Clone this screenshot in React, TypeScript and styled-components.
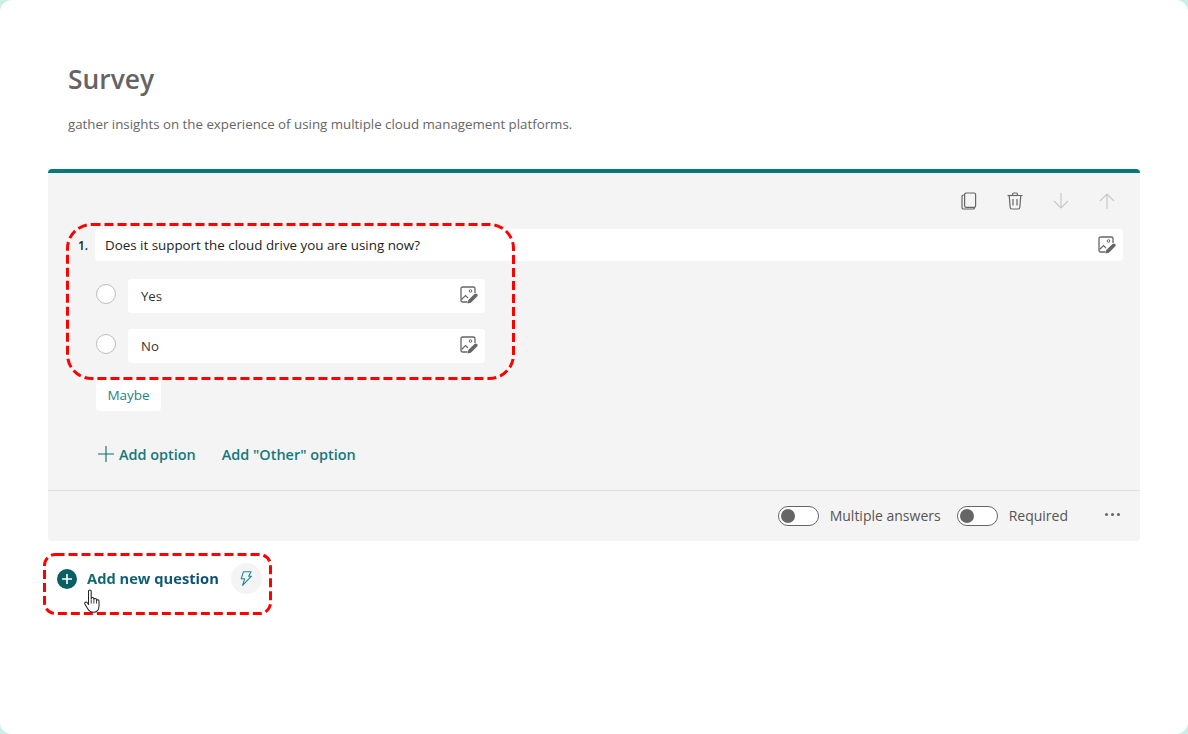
import React from "react";
import styled, { createGlobalStyle } from "styled-components";

const GlobalStyle = createGlobalStyle`
  html, body {
    margin: 0;
    padding: 0;
    background: #cdeee6;
  }
  * {
    box-sizing: border-box;
  }
`;

const ImageEditIcon = () => (
  <svg width="18" height="18" viewBox="0 0 18 18" fill="none">
    <path d="M7.500 16H2.600C1.700 16 1 15.300 1 14.400V2.600C1 1.700 1.700 1 2.600 1h10.800c.9 0 1.600.7 1.600 1.600V7" stroke="#666" strokeWidth="1.300" />
    <circle cx="10.500" cy="5" r="1.300" stroke="#666" strokeWidth="1" />
    <path d="M1.500 13.500L5.500 9.500l2.500 2.500" stroke="#666" strokeWidth="1.100" />
    <path d="M7.500 17.500l.8-3.400 6.200-6.200c.7-.7 1.900-.7 2.600 0 .7.7.7 1.900 0 2.600l-6.200 6.200-3.400.8z" fill="#666" />
  </svg>
);

const CopyIcon = () => (
  <svg width="16" height="18" viewBox="0 0 16 18" fill="none" stroke="#666" strokeWidth="1.2">
    <rect x="3.6" y="1" width="11" height="14.4" rx="1.6" />
    <path d="M3.6 3H2.6C1.7 3 1 3.7 1 4.6v10.8C1 16.3 1.7 17 2.6 17h9.4c.9 0 1.6-.5 1.6-1.6" />
  </svg>
);

const TrashIcon = () => (
  <svg width="16" height="18" viewBox="0 0 16 18" fill="none" stroke="#666" strokeWidth="1.2">
    <path d="M0.5 3.5h15" />
    <path d="M5.5 3.5V2.4C5.5 1.6 6.1 1 6.9 1h2.2c.8 0 1.4.6 1.4 1.4v1.1" />
    <path d="M2.2 3.5l1 12c.1.9.8 1.5 1.6 1.5h6.4c.8 0 1.5-.6 1.6-1.5l1-12" />
    <path d="M6 7v6.5M10 7v6.5" />
  </svg>
);

const ArrowIcon = ({ up }: { up?: boolean }) => (
  <svg width="16" height="16" viewBox="0 0 16 16" fill="none" stroke="#c8c8c8" strokeWidth="1.2">
    {up ? <path d="M8 16V1M1 8l7-7 7 7" /> : <path d="M8 0v15M1 8l7 7 7-7" />}
  </svg>
);

const BoltIcon = () => (
  <svg width="12" height="15" viewBox="0 0 12 15" fill="none" stroke="#1b8a8f" strokeWidth="1.1" strokeLinejoin="round">
    <path d="M3.5 0.7h7.6L8.6 5.2h2.9L2.6 14.3l2-6.5H1.2z" />
  </svg>
);

const HandCursor = () => (
  <svg width="18" height="24" viewBox="0 0 18 24" fill="none">
    <path
      d="M4.200 2.200c0-1.700 2.600-1.700 2.600 0v7.200c.2-1.600 2.600-1.500 2.600.1v.6c.2-1.400 2.500-1.300 2.500.3v.7c.3-1.200 2.400-1 2.400.5v4.800c0 3.400-2 6-5.400 6-2.700 0-4.100-1-5.300-3.100L.7 14.400c-.8-1.500 1.300-2.600 2.300-1.200l1.200 1.700z"
      fill="#fff"
      stroke="#222"
      strokeWidth="1"
      strokeLinejoin="round"
    />
    <path d="M6.800 10v4M9.400 10.500v3.500M11.900 11.200v2.800" stroke="#222" strokeWidth="0.8" />
  </svg>
);

// red dashed marker drawn over the screenshot
const Marker = ({ width, height, radius }: { width: number; height: number; radius: number }) => (
  <svg width={width} height={height} fill="none">
    <rect
      x="1.5"
      y="1.5"
      width={width - 3}
      height={height - 3}
      rx={radius}
      stroke="#f00"
      strokeWidth="3"
      strokeDasharray="9 4"
    />
  </svg>
);

const App: React.FC = () => {
  const options = ["Yes", "No"];

  return (
    <>
      <GlobalStyle />
      <Panel>
        <Header>
          <Title>Survey</Title>
          <Subtitle>gather insights on the experience of using multiple cloud management platforms.</Subtitle>
        </Header>

        <Card>
          <Toolbar>
            <ToolButton><CopyIcon /></ToolButton>
            <ToolButton><TrashIcon /></ToolButton>
            <ToolButton><ArrowIcon /></ToolButton>
            <ToolButton><ArrowIcon up /></ToolButton>
          </Toolbar>

          <QuestionRow>
            <Number>1.</Number>
            <QuestionField>
              <span>Does it support the cloud drive you are using now?</span>
              <ImageEditIcon />
            </QuestionField>
          </QuestionRow>

          <OptionList>
            {options.map((option) => (
              <OptionRow key={option}>
                <Radio />
                <OptionField>
                  <span>{option}</span>
                  <ImageEditIcon />
                </OptionField>
              </OptionRow>
            ))}
            <MaybeChip>Maybe</MaybeChip>
          </OptionList>

          <AddRow>
            <AddLink>
              <svg width="16" height="16" viewBox="0 0 16 16" stroke="#0b6a6e" strokeWidth="1.1">
                <path d="M8 0v16M0 8h16" />
              </svg>
              Add option
            </AddLink>
            <AddLink>Add "Other" option</AddLink>
          </AddRow>

          <Footer>
            <ToggleGroup>
              <Toggle />
              <ToggleLabel>Multiple answers</ToggleLabel>
            </ToggleGroup>
            <ToggleGroup>
              <Toggle />
              <ToggleLabel>Required</ToggleLabel>
            </ToggleGroup>
            <More>
              <i />
              <i />
              <i />
            </More>
          </Footer>
        </Card>

        <NewQuestion>
          <PlusCircle>
            <svg width="10" height="10" viewBox="0 0 10 10" stroke="#fff" strokeWidth="1.6">
              <path d="M5 0v10M0 5h10" />
            </svg>
          </PlusCircle>
          <NewQuestionText>Add new question</NewQuestionText>
          <BoltButton><BoltIcon /></BoltButton>
        </NewQuestion>

        <QuestionHighlight><Marker width={449} height={157} radius={24} /></QuestionHighlight>
        <AddHighlight><Marker width={229} height={62} radius={11} /></AddHighlight>
        <Cursor><HandCursor /></Cursor>
      </Panel>
    </>
  );
};

export default App;

const font = `"Open Sans", "Noto Sans", sans-serif`;

const Panel = styled.div`
  position: relative;
  width: 1188px;
  height: 734px;
  background: #fff;
  border-radius: 12px;
  overflow: hidden;
  font-family: ${font};
`;

const Header = styled.header`
  display: flex;
  flex-direction: column;
  height: 169px;
  padding: 61px 0 0 68px;
`;

const Title = styled.h1`
  margin: 0;
  font-size: 26.4px;
  line-height: 36px;
  font-weight: 600;
  color: #646464;
`;

const Subtitle = styled.p`
  margin: 17px 0 0;
  font-size: 13.3px;
  line-height: 20px;
  color: #666;
`;

const Card = styled.section`
  margin: 0 48px;
  height: 372px;
  background: #f4f4f4;
  border-top: 4px solid #007a7c;
  border-radius: 4px;
  display: flex;
  flex-direction: column;
`;

const Toolbar = styled.div`
  display: flex;
  justify-content: flex-end;
  align-items: center;
  gap: 14px;
  height: 56px;
  padding-right: 17px;
`;

const ToolButton = styled.div`
  width: 32px;
  height: 32px;
  display: flex;
  align-items: center;
  justify-content: center;
`;

const QuestionRow = styled.div`
  display: flex;
  align-items: center;
  padding: 0 17px 0 31px;
`;

const Number = styled.div`
  width: 16px;
  margin-left: -1px;
  margin-right: 1px;
  font-size: 12px;
  font-weight: 600;
  color: #222;
`;

const QuestionField = styled.div`
  flex: 1;
  height: 32px;
  display: flex;
  align-items: center;
  justify-content: space-between;
  padding: 0 7px 0 10px;
  background: #fff;
  border-radius: 4px;
  font-size: 13.36px;
  color: #222;

  svg {
    margin-bottom: 1px;
  }
`;

const OptionList = styled.div`
  display: flex;
  flex-direction: column;
  gap: 16px;
  margin-top: 18px;
  padding-left: 48px;
`;

const OptionRow = styled.div`
  display: flex;
  align-items: flex-start;
  gap: 12px;
`;

const Radio = styled.div`
  width: 20px;
  height: 20px;
  margin-top: 5px;
  border: 1px solid #bdbdbd;
  border-radius: 50%;
  background: #fff;
`;

const OptionField = styled.div`
  width: 357px;
  height: 34px;
  display: flex;
  align-items: center;
  justify-content: space-between;
  padding: 0 7px 0 13px;
  background: #fff;
  border-radius: 4px;
  font-size: 13.2px;
  color: #333;

  svg {
    margin-bottom: 3px;
  }
`;

const MaybeChip = styled.div`
  width: 65px;
  height: 32px;
  display: flex;
  align-items: center;
  justify-content: center;
  background: #fff;
  border-radius: 4px;
  font-size: 13.5px;
  color: #1b8488;
`;

const AddRow = styled.div`
  display: flex;
  align-items: center;
  gap: 26px;
  height: 24px;
  margin-top: 31px;
  padding-left: 50px;
`;

const AddLink = styled.div`
  display: flex;
  align-items: center;
  gap: 5px;
  font-size: 14.45px;
  font-weight: 600;
  color: #14797d;
`;

const Footer = styled.div`
  display: flex;
  justify-content: flex-end;
  align-items: center;
  flex: 1;
  margin-top: 24px;
  padding-right: 20px;
  border-top: 1px solid #e0e0e0;
`;

const ToggleGroup = styled.div`
  display: flex;
  align-items: center;
  gap: 11px;
  margin-right: 16px;
`;

const Toggle = styled.div`
  position: relative;
  width: 41px;
  height: 20px;
  margin-bottom: 1px;
  border: 1px solid #666;
  border-radius: 10px;
  background: #fff;

  &::after {
    content: "";
    position: absolute;
    left: 2px;
    top: 2px;
    width: 14px;
    height: 14px;
    border-radius: 50%;
    background: #666;
  }
`;

const ToggleLabel = styled.span`
  margin-bottom: 2px;
  font-size: 14px;
  color: #555;
`;

const More = styled.div`
  display: flex;
  gap: 3px;
  margin-left: 21px;
  margin-bottom: 3px;

  i {
    width: 3px;
    height: 3px;
    border-radius: 50%;
    background: #666;
  }
`;

const NewQuestion = styled.div`
  display: flex;
  align-items: center;
  height: 31px;
  margin: 22px 0 0 57px;
`;

const PlusCircle = styled.div`
  width: 20px;
  height: 20px;
  display: flex;
  align-items: center;
  justify-content: center;
  border-radius: 50%;
  background: #0a5f63;
`;

const NewQuestionText = styled.span`
  margin: 0 0 2px 10px;
  font-size: 14.7px;
  font-weight: 700;
  background: linear-gradient(90deg, #0f6b6d, #0b4a78);
  -webkit-background-clip: text;
  background-clip: text;
  color: transparent;
`;

const BoltButton = styled.div`
  width: 31px;
  height: 31px;
  margin-left: 12px;
  display: flex;
  align-items: center;
  justify-content: center;
  border-radius: 50%;
  background: #f4f4f4;
`;

const QuestionHighlight = styled.div`
  position: absolute;
  left: 66px;
  top: 223px;
  line-height: 0;
  pointer-events: none;
`;

const AddHighlight = styled.div`
  position: absolute;
  left: 43px;
  top: 553px;
  line-height: 0;
  pointer-events: none;
`;

const Cursor = styled.div`
  position: absolute;
  left: 84px;
  top: 589px;
  line-height: 0;

  svg {
    width: 19px;
    height: 25px;
  }
`;
